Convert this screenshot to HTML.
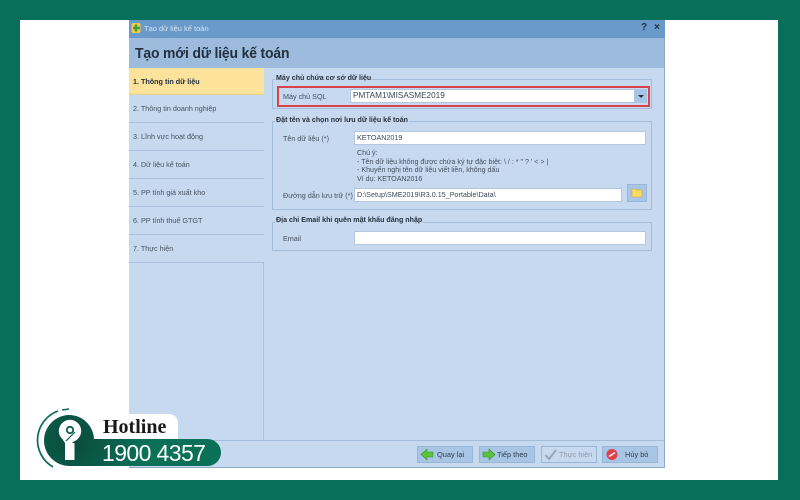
<!DOCTYPE html>
<html lang="vi"><head><meta charset="utf-8"><title>Tạo mới dữ liệu kế toán</title>
<style>
html,body{margin:0;padding:0;width:800px;height:500px;overflow:hidden;background:#08705a}
*{box-sizing:border-box}
body{position:relative;font-family:"Liberation Sans",sans-serif;color:#3a4a5c}
.a{position:absolute}
.t{position:absolute;white-space:nowrap;font-size:7.2px;line-height:11px;color:#41505f}
.lg{position:absolute;background:#c7d9ef;padding:0 1px;font-size:7.1px;line-height:10px;font-weight:bold;color:#26323f;white-space:nowrap}
.g{position:absolute;border:1px solid #a3bcd8;border-radius:1px}
.in{position:absolute;background:#fff;border:1px solid #b3c8e0;font-size:7.2px;line-height:12px;padding-left:2px;color:#3d4a58;white-space:nowrap;overflow:hidden}
.side{position:absolute;left:129px;width:135px;height:28px;background:#c7d9ef;border-bottom:1px solid #a9c1dc;font-size:7.2px;line-height:27px;padding-left:4px;color:#44525f;white-space:nowrap}
.btn{position:absolute;top:446px;height:17px;width:56px;background:#a9c5e6;border:1px solid #9ab6d6;font-size:7.4px;line-height:15px;color:#2f3b48;white-space:nowrap}
.btn span{position:absolute;top:0}
.btn svg{position:absolute;left:2px;top:1px}
</style></head><body>
<div class="a" style="left:20px;top:20px;width:758px;height:460px;background:#fff"></div>
<div class="a" style="left:129px;top:20px;width:536px;height:448px;background:#c7d9ef;border-right:1px solid #8ea9c6;border-bottom:1px solid #8ea9c6"></div>
<div class="a" style="left:129px;top:20px;width:536px;height:18px;background:#6a9aca"></div>
<svg class="a" style="left:131px;top:22px" width="11" height="12" viewBox="0 0 11 12"><rect x="0.5" y="1" width="9" height="10" rx="2" fill="#f2c94c"/><path d="M5 2.500v7M2 6h7" stroke="#3f9e3c" stroke-width="2.400"/></svg>
<div class="t" style="left:144px;top:23px;font-size:7.500px;color:#d6e4f4">Tạo dữ liệu kế toán</div>
<div class="t" style="left:641px;top:22px;font-size:10px;font-weight:bold;color:#1e2f42">?</div>
<div class="t" style="left:654px;top:22px;font-size:10px;font-weight:bold;color:#1e2f42">×</div>
<div class="a" style="left:129px;top:38px;width:535px;height:30px;background:#9dbbdc"></div>
<div class="t" style="left:135px;top:45px;font-size:14.500px;line-height:18px;font-weight:bold;color:#22303f;letter-spacing:-.15px;transform:scaleX(.96);transform-origin:0 0">Tạo mới dữ liệu kế toán</div>

<div class="a" style="left:129px;top:68px;width:135px;height:372px;background:#c7d9ef;border-right:1px solid #a9c1dc"></div>
<div class="side" style="top:68px;height:27px;background:#fde29b;font-weight:bold;color:#26323f;border-bottom:1px solid #e6cf94">1. Thông tin dữ liệu</div>
<div class="side" style="top:95px">2. Thông tin doanh nghiệp</div>
<div class="side" style="top:123px">3. Lĩnh vực hoạt động</div>
<div class="side" style="top:151px">4. Dữ liệu kế toán</div>
<div class="side" style="top:179px">5. PP tính giá xuất kho</div>
<div class="side" style="top:207px">6. PP tính thuế GTGT</div>
<div class="side" style="top:235px">7. Thực hiện</div>

<div class="g" style="left:272px;top:79px;width:380px;height:30px"></div>
<div class="lg" style="left:275px;top:73px">Máy chủ chứa cơ sở dữ liệu</div>
<div class="a" style="left:277px;top:86px;width:373px;height:21px;border:2px solid #d9434b"></div>
<div class="t" style="left:283px;top:91px">Máy chủ SQL</div>
<div class="in" style="left:350px;top:89px;width:297px;height:14px;line-height:12px;font-size:8.200px">PMTAM1\MISASME2019</div>
<div class="a" style="left:634px;top:89px;width:13px;height:14px;background:#a9c5e6"></div>
<div class="a" style="left:638px;top:95px;width:0;height:0;border-left:3px solid transparent;border-right:3px solid transparent;border-top:3px solid #25323f"></div>

<div class="g" style="left:272px;top:121px;width:380px;height:89px"></div>
<div class="lg" style="left:275px;top:115px">Đặt tên và chọn nơi lưu dữ liệu kế toán</div>
<div class="t" style="left:283px;top:133px">Tên dữ liệu (*)</div>
<div class="in" style="left:354px;top:131px;width:292px;height:14px">KETOAN2019</div>
<div class="t" style="left:357px;top:149px;line-height:8.700px;font-size:7.100px">Chú ý:<br>- Tên dữ liệu không được chứa ký tự đặc biệt: \ / : * " ? ' &lt; &gt; |<br>- Khuyến nghị tên dữ liệu viết liền, không dấu<br>Ví dụ: KETOAN2016</div>
<div class="t" style="left:283px;top:190px">Đường dẫn lưu trữ (*)</div>
<div class="in" style="left:354px;top:188px;width:268px;height:14px">D:\Setup\SME2019\R3.0.15_Portable\Data\</div>
<div class="a" style="left:627px;top:184px;width:20px;height:18px;background:#a9c5e6;border:1px solid #9ab6d6"></div>
<svg class="a" style="left:631px;top:187px" width="12" height="11" viewBox="0 0 12 11"><path d="M1 2h4l1 1h5v7H1z" fill="#f8dc62" stroke="#c9a53a" stroke-width=".6"/></svg>

<div class="g" style="left:272px;top:222px;width:380px;height:29px"></div>
<div class="lg" style="left:275px;top:215px">Địa chỉ Email khi quên mật khẩu đăng nhập</div>
<div class="t" style="left:283px;top:233px">Email</div>
<div class="in" style="left:354px;top:231px;width:292px;height:14px"></div>

<div class="a" style="left:129px;top:440px;width:535px;height:1px;background:#a3bcd8"></div>

<div class="btn" style="left:417px"><svg width="14" height="13" viewBox="0 0 14 13"><path d="M1 6.500 7 1v3h6v5H7v3z" fill="#5cc23d" stroke="#3d8f2a" stroke-width=".6"/></svg><span style="left:19px">Quay lại</span></div>
<div class="btn" style="left:479px"><svg width="14" height="13" viewBox="0 0 14 13"><path d="M13 6.500 7 1v3H1v5h6v3z" fill="#5cc23d" stroke="#3d8f2a" stroke-width=".6"/></svg><span style="left:17px">Tiếp theo</span></div>
<div class="btn" style="left:541px;background:#c7d9ef;color:#8c99a8"><svg width="14" height="13" viewBox="0 0 14 13"><path d="M1.500 7l3.500 4 7-9" fill="none" stroke="#99a5b2" stroke-width="2"/></svg><span style="left:17px">Thực hiện</span></div>
<div class="btn" style="left:602px"><svg width="14" height="13" viewBox="0 0 14 13"><circle cx="7" cy="6.500" r="5.500" fill="#e0404a"/><path d="M4 8.500l6-4" stroke="#fff" stroke-width="1.400"/></svg><span style="left:22px">Hủy bỏ</span></div>

<div class="a" style="left:95px;top:414px;width:83px;height:26px;background:#fff;border-radius:0 9px 0 0"></div>
<div class="a" style="left:129px;top:468px;width:100px;height:12px;background:#fff"></div>
<svg class="a" style="left:30px;top:400px" width="200" height="75" viewBox="30 400 200 75">
<defs><radialGradient id="rg" gradientUnits="userSpaceOnUse" cx="72" cy="440" r="70"><stop offset="0" stop-color="#0a4a3b"/><stop offset=".45" stop-color="#0a5a48"/><stop offset="1" stop-color="#0a7058"/></radialGradient></defs>
<path d="M58 411A31 31 0 0 0 53 467" fill="none" stroke="#0a6a55" stroke-width="1.700"/>
<path d="M62 410l7-1" fill="none" stroke="#0a6a55" stroke-width="1.400"/>
<path d="M69 415a25 25 0 0 1 25 24H207.500a13.500 13.500 0 0 1 0 27H70a25.500 25.500 0 0 1-1-51z" fill="url(#rg)"/>
<circle cx="70" cy="431" r="11.200" fill="#fff"/>
<path d="M63 440h12l-3 3h-7z" fill="#fff"/>
<circle cx="70" cy="430" r="3.200" fill="none" stroke="#0b5f4c" stroke-width="1.800"/>
<path d="M66 441l9-9" stroke="#0b5f4c" stroke-width="1.200"/>
<rect x="65" y="443" width="9.500" height="17" fill="#fff"/>
</svg>
<div class="t" style="left:103px;top:416px;font-family:'Liberation Serif',serif;font-size:20px;line-height:22px;font-weight:bold;color:#1a1a1a">Hotline</div>
<div class="t" style="left:102px;top:440px;font-size:23px;line-height:26px;color:#fff;letter-spacing:-.6px">1900 4357</div>
</body></html>
